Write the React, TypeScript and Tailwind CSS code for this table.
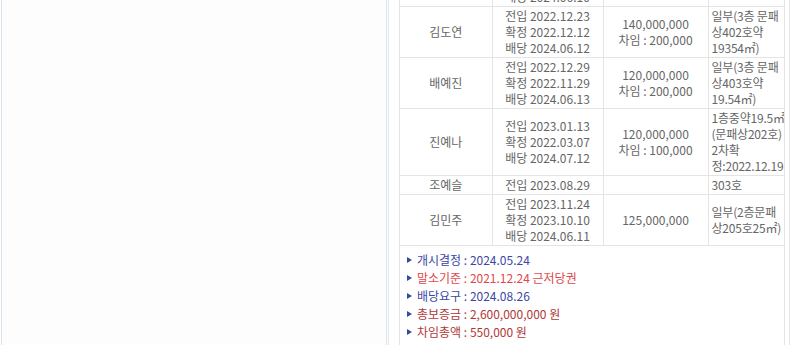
const rows = [
  {
    name: "",
    dates: ["전입 2022.12.15", "확정 2022.12.15", "배당 2024.06.10"],
    price: ["130,000,000"],
    note: ["303호"],
  },
  {
    name: "김도연",
    dates: ["전입 2022.12.23", "확정 2022.12.12", "배당 2024.06.12"],
    price: ["140,000,000", "차임 : 200,000"],
    note: ["일부(3층 문패", "상402호약", "19354㎡)"],
  },
  {
    name: "배예진",
    dates: ["전입 2022.12.29", "확정 2022.11.29", "배당 2024.06.13"],
    price: ["120,000,000", "차임 : 200,000"],
    note: ["일부(3층 문패", "상403호약", "19.54㎡)"],
  },
  {
    name: "진예나",
    dates: ["전입 2023.01.13", "확정 2022.03.07", "배당 2024.07.12"],
    price: ["120,000,000", "차임 : 100,000"],
    note: ["1층중약19.5㎡", "(문패상202호)", "2차확", "정:2022.12.19"],
  },
  {
    name: "조예슬",
    dates: ["전입 2023.08.29"],
    price: [],
    note: ["303호"],
  },
  {
    name: "김민주",
    dates: ["전입 2023.11.24", "확정 2023.10.10", "배당 2024.06.11"],
    price: ["125,000,000"],
    note: ["일부(2층문패", "상205호25㎡)"],
  },
];

const summary = [
  { label: "개시결정", value: "2024.05.24", color: "text-[#3c47a6]" },
  { label: "말소기준", value: "2021.12.24 근저당권", color: "text-[#e2474a]" },
  { label: "배당요구", value: "2024.08.26", color: "text-[#3c47a6]" },
  { label: "총보증금", value: "2,600,000,000 원", color: "text-[#b03838]" },
  { label: "차임총액", value: "550,000 원", color: "text-[#b03838]" },
];

function Lines({ items }: { items: string[] }) {
  return (
    <>
      {items.map((s, i) => (
        <div key={i} className="h-[16px] leading-[16px] whitespace-nowrap">
          {s}
        </div>
      ))}
    </>
  );
}

export default function App() {
  return (
    <div
      className="w-[800px] h-[345px] overflow-hidden bg-white flex pl-[1px] text-[12px] text-[#666]"
      style={{ fontFamily: '"Noto Sans CJK KR", "Noto Sans", sans-serif' }}
    >
      {/* left panel (empty) */}
      <div className="w-[386px] shrink-0 border-x border-[#dbe3ec] bg-[#fdfdfe]" />

      {/* right panel */}
      <div className="ml-[1px] w-[402px] shrink-0 border-x border-[#e1e7ee] pl-[10px] pr-[4px]">
        <div className="-mt-[44px] border-x border-[#e4e4e4]">
          <table className="w-full border-collapse table-fixed">
            <colgroup>
              <col className="w-[92px]" />
              <col className="w-[111px]" />
              <col className="w-[105px]" />
              <col />
            </colgroup>
            <tbody>
              {rows.map((r, i) => (
                <tr key={i}>
                  <td className="border-b border-r border-[#e4e4e4] py-[1px] text-center align-middle">
                    <div className="h-[16px] leading-[16px]">{r.name}</div>
                  </td>
                  <td className="border-b border-r border-[#e4e4e4] py-[1px] text-center align-middle">
                    <Lines items={r.dates} />
                  </td>
                  <td className="border-b border-r border-[#e4e4e4] py-[1px] text-center align-middle">
                    <Lines items={r.price} />
                  </td>
                  <td className="border-b border-[#e4e4e4] py-[1px] pl-[3px] text-left align-middle overflow-hidden tracking-[-0.2px]">
                    <Lines items={r.note} />
                  </td>
                </tr>
              ))}
            </tbody>
          </table>

          <ul className="pt-[5px] pl-[7px] pb-4">
            {summary.map((s) => (
              <li key={s.label} className={`flex items-center h-[18px] ${s.color}`}>
                <svg width="5" height="6" viewBox="0 0 5 6" className="mr-[5px] shrink-0" aria-hidden>
                  <polygon points="0,0 5,3 0,6" fill="#2b4ea3" />
                </svg>
                <span className="whitespace-nowrap">
                  {s.label} : {s.value}
                </span>
              </li>
            ))}
          </ul>
        </div>
      </div>
    </div>
  );
}
